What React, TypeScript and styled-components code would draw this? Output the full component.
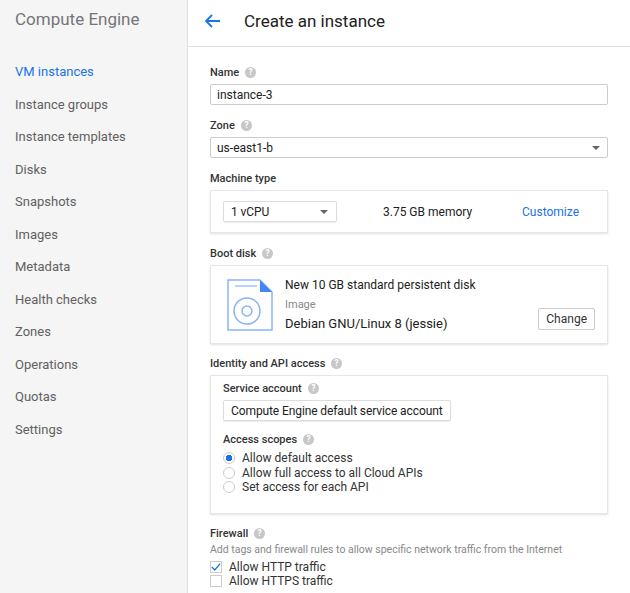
import styled, { createGlobalStyle } from "styled-components";

const Global = createGlobalStyle`
  body { margin: 0; font-family: Roboto, "Liberation Sans", sans-serif; color: #212121; background: #fff; }
`;

const nav = ["VM instances", "Instance groups", "Instance templates", "Disks", "Snapshots", "Images", "Metadata", "Health checks", "Zones", "Operations", "Quotas", "Settings"];

function Help() {
  return (
    <svg width="11" height="11" viewBox="0 0 12 12" style={{ marginLeft: 6 }}>
      <circle cx="6" cy="6" r="6" fill="#c7c7c7" />
      <text x="6" y="9" fontSize="9" fill="#fff" textAnchor="middle" fontFamily="Roboto, sans-serif" fontWeight="bold">?</text>
    </svg>
  );
}

function Caret() {
  return (
    <svg width="8" height="4" viewBox="0 0 8 4"><path d="M0 0h8L4 4z" fill="#666" /></svg>
  );
}

export default function App() {
  return (
    <Page>
      <Global />
      <Sidebar>
        <Brand>Compute Engine</Brand>
        <NavList>
          {nav.map((n, i) => (
            <NavItem key={n} $active={i === 0}>{n}</NavItem>
          ))}
        </NavList>
      </Sidebar>
      <Main>
        <TopBar>
          <svg width="16" height="14" viewBox="0 0 16 14">
            <path d="M15 7H2M7 1L1 7l6 6" stroke="#1a73e8" strokeWidth="1.8" fill="none" />
          </svg>
          <PageTitle>Create an instance</PageTitle>
        </TopBar>
        <Form>
          <Label $top={2}>Name <Help /></Label>
          <Input>instance-3</Input>
          <Label $top={14}>Zone <Help /></Label>
          <Input>us-east1-b<Caret /></Input>
          <Label $top={14}>Machine type</Label>
          <Card $pad="10px 12px">
            <MachineRow>
              <Select $w={114}>1 vCPU<Caret /></Select>
              <Memory>3.75 GB memory</Memory>
              <Link>Customize</Link>
            </MachineRow>
          </Card>
          <Label $top={14}>Boot disk <Help /></Label>
          <Card $pad="12px 12px 12px 16px">
            <DiskRow>
              <svg width="46" height="52" viewBox="0 0 46 52">
                <path d="M1 1h32l12 12v38H1z" fill="#fff" stroke="#8ab4f8" strokeWidth="1.5" />
                <path d="M33 1l12 12H33z" fill="#4285f4" />
                <path d="M8 7h22" stroke="#8ab4f8" strokeWidth="1.2" />
                <circle cx="20" cy="32" r="13" fill="none" stroke="#8ab4f8" strokeWidth="1.5" />
                <circle cx="20" cy="32" r="5" fill="none" stroke="#8ab4f8" strokeWidth="1.5" />
              </svg>
              <DiskInfo>
                <DiskLine>New 10 GB standard persistent disk</DiskLine>
                <Muted>Image</Muted>
                <DiskName>Debian GNU/Linux 8 (jessie)</DiskName>
              </DiskInfo>
              <Button>Change</Button>
            </DiskRow>
          </Card>
          <Label $top={13}>Identity and API access <Help /></Label>
          <Card $pad="6px 12px 18px">
            <Label>Service account <Help /></Label>
            <Select $w={228}>Compute Engine default service account<Caret /></Select>
            <Label $top={12}>Access scopes <Help /></Label>
            <Option><Radio $on />Allow default access</Option>
            <Option><Radio />Allow full access to all Cloud APIs</Option>
            <Option><Radio />Set access for each API</Option>
          </Card>
          <Label $top={13}>Firewall <Help /></Label>
          <Hint>Add tags and firewall rules to allow specific network traffic from the Internet</Hint>
          <Option>
            <Check>
              <svg width="12" height="10" viewBox="0 0 12 10"><path d="M1 5l3.5 3.5L11 1" stroke="#1a73e8" strokeWidth="1.6" fill="none" /></svg>
            </Check>
            Allow HTTP traffic
          </Option>
          <Option><Check />Allow HTTPS traffic</Option>
        </Form>
      </Main>
    </Page>
  );
}

const Page = styled.div`
  display: flex;
  width: 630px;
  height: 593px;
  overflow: hidden;
`;
const Sidebar = styled.div`
  width: 187px;
  flex-shrink: 0;
  background: #f5f5f5;
  border-right: 1px solid #e0e0e0;
`;
const Brand = styled.div`
  height: 47px;
  box-sizing: border-box;
  padding: 9px 15px;
  font-size: 17px;
  color: #757575;
`;
const NavList = styled.div`
  display: flex;
  flex-direction: column;
  padding-top: 17px;
`;
const NavItem = styled.div<{ $active?: boolean }>`
  height: 32.5px;
  padding-left: 15px;
  font-size: 13px;
  color: ${(p) => (p.$active ? "#1a73e8" : "#616161")};
`;
const Main = styled.div`
  flex: 1;
`;
const TopBar = styled.div`
  height: 47px;
  box-sizing: border-box;
  border-bottom: 1px solid #e0e0e0;
  display: flex;
  align-items: center;
  padding: 0 0 4px 17px;
  gap: 23px;
`;
const PageTitle = styled.div`
  font-size: 17px;
  color: #212121;
`;
const Form = styled.div`
  padding: 17px 22px 0 22px;
  display: flex;
  flex-direction: column;
`;
const Label = styled.div<{ $top?: number }>`
  display: flex;
  align-items: center;
  font-size: 11px;
  font-weight: 500;
  color: #333;
  margin-top: ${(p) => p.$top ?? 0}px;
  margin-bottom: 5px;
`;
const Input = styled.div`
  height: 21px;
  box-sizing: border-box;
  border: 1px solid #ccc;
  border-radius: 2px;
  display: flex;
  align-items: center;
  justify-content: space-between;
  padding: 0 7px 0 6px;
  font-size: 12px;
`;
const Card = styled.div<{ $pad: string }>`
  border: 1px solid #e6e6e6;
  box-shadow: 0 1px 2px rgba(0, 0, 0, 0.12);
  padding: ${(p) => p.$pad};
`;
const MachineRow = styled.div`
  display: flex;
  align-items: center;
`;
const Select = styled.div<{ $w: number }>`
  width: ${(p) => p.$w}px;
  height: 21px;
  box-sizing: border-box;
  border: 1px solid #ddd;
  box-shadow: 0 1px 1px rgba(0, 0, 0, 0.08);
  border-radius: 2px;
  display: flex;
  align-items: center;
  justify-content: space-between;
  padding: 0 8px 0 7px;
  font-size: 12px;
  white-space: nowrap;
  letter-spacing: -0.1px;
`;
const Memory = styled.div`
  margin-left: 46px;
  font-size: 12px;
  flex: 1;
`;
const Link = styled.div`
  color: #1a73e8;
  font-size: 12px;
  margin-right: 16px;
`;
const DiskRow = styled.div`
  display: flex;
  align-items: flex-end;
`;
const DiskInfo = styled.div`
  flex: 1;
  margin-left: 12px;
  display: flex;
  flex-direction: column;
`;
const DiskLine = styled.div`
  font-size: 12px;
`;
const Muted = styled.div`
  font-size: 11px;
  color: #888;
  margin-top: 6px;
`;
const DiskName = styled.div`
  font-size: 13px;
  margin-top: 5px;
`;
const Button = styled.div`
  border: 1px solid #ccc;
  border-radius: 2px;
  padding: 3px 7px;
  font-size: 12px;
  color: #333;
  margin-bottom: 1px;
`;
const Option = styled.div`
  display: flex;
  align-items: center;
  gap: 7px;
  font-size: 12px;
  height: 14.5px;
  color: #333;
`;
const Radio = styled.span<{ $on?: boolean }>`
  width: 10px;
  height: 10px;
  border-radius: 50%;
  border: 1px solid #ccc;
  background: ${(p) => (p.$on ? "radial-gradient(circle, #1a73e8 3px, #fff 3.5px)" : "#fff")};
`;
const Check = styled.span`
  width: 10px;
  height: 10px;
  border: 1px solid #ccc;
  display: flex;
  align-items: center;
  justify-content: center;
`;
const Hint = styled.div`
  font-size: 10.5px;
  color: #888;
  margin: -2px 0 4px;
`;
